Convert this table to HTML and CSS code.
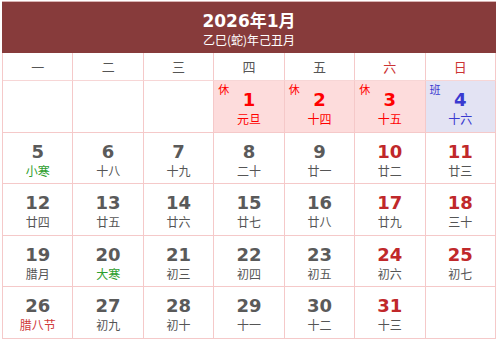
FILE: index.html
```html
<!DOCTYPE html>
<html lang="zh">
<head>
<meta charset="utf-8">
<link rel="stylesheet" href="styles.css">
</head>
<body>
<div class="cal">
  <div class="head">
    <div class="title">2026年1月</div>
    <div class="sub">乙巳(蛇)年己丑月</div>
  </div>
  <div class="grid">
    <div class="wd">一</div><div class="wd">二</div><div class="wd">三</div><div class="wd">四</div><div class="wd">五</div><div class="wd we">六</div><div class="wd we">日</div>

    <div class="c"></div><div class="c"></div><div class="c"></div>
    <div class="c hol"><span class="tag">休</span><b>1</b><i>元旦</i></div>
    <div class="c hol"><span class="tag">休</span><b>2</b><i>十四</i></div>
    <div class="c hol"><span class="tag">休</span><b>3</b><i>十五</i></div>
    <div class="c work"><span class="tag">班</span><b>4</b><i>十六</i></div>

    <div class="c"><b>5</b><i class="term">小寒</i></div>
    <div class="c"><b>6</b><i>十八</i></div>
    <div class="c"><b>7</b><i>十九</i></div>
    <div class="c"><b>8</b><i>二十</i></div>
    <div class="c"><b>9</b><i>廿一</i></div>
    <div class="c we"><b>10</b><i>廿二</i></div>
    <div class="c we"><b>11</b><i>廿三</i></div>

    <div class="c"><b>12</b><i>廿四</i></div>
    <div class="c"><b>13</b><i>廿五</i></div>
    <div class="c"><b>14</b><i>廿六</i></div>
    <div class="c"><b>15</b><i>廿七</i></div>
    <div class="c"><b>16</b><i>廿八</i></div>
    <div class="c we"><b>17</b><i>廿九</i></div>
    <div class="c we"><b>18</b><i>三十</i></div>

    <div class="c"><b>19</b><i>腊月</i></div>
    <div class="c"><b>20</b><i class="term">大寒</i></div>
    <div class="c"><b>21</b><i>初三</i></div>
    <div class="c"><b>22</b><i>初四</i></div>
    <div class="c"><b>23</b><i>初五</i></div>
    <div class="c we"><b>24</b><i>初六</i></div>
    <div class="c we"><b>25</b><i>初七</i></div>

    <div class="c"><b>26</b><i class="fest">腊八节</i></div>
    <div class="c"><b>27</b><i>初九</i></div>
    <div class="c"><b>28</b><i>初十</i></div>
    <div class="c"><b>29</b><i>十一</i></div>
    <div class="c"><b>30</b><i>十二</i></div>
    <div class="c we"><b>31</b><i>十三</i></div>
    <div class="c"></div>
  </div>
</div>
</body>
</html>
```
FILE: styles.css
```css
* { box-sizing: border-box; }
html, body { margin: 0; padding: 0; background: #fff; }
body { font-family: "Noto Sans CJK SC", "DejaVu Sans", sans-serif; }
.cal {
  width: 494px;
  margin: 1px 0 0 2px;
  border-top: 1px solid #d9b3b3;
}
.head {
  background: #873b3b;
  height: 51px;
  color: #fff;
  text-align: center;
  padding-top: 10px;
}
.title {
  font-family: "DejaVu Sans", "Noto Sans CJK SC", sans-serif;
  font-weight: bold;
  font-size: 17px;
  line-height: 18px;
}
.sub {
  font-size: 12px;
  line-height: 14px;
  margin-top: 3px;
}
.grid {
  display: grid;
  grid-template-columns: repeat(7, 1fr);
  grid-template-rows: 28px repeat(5, 51.6px);
  border-left: 1px solid #f5c9c9;
}
.grid > div {
  border-right: 1px solid #f5c9c9;
  border-bottom: 1px solid #f5c9c9;
}
.wd {
  display: flex;
  align-items: center;
  justify-content: center;
  color: #555;
  font-size: 13px;
  border-bottom-color: #f7d6d6 !important;
}
.wd.we { color: #c33; }
.c {
  position: relative;
  display: flex;
  flex-direction: column;
  align-items: center;
  padding-top: 8px;
}
.c b {
  font-family: "DejaVu Sans", sans-serif;
  font-weight: bold;
  font-size: 18px;
  line-height: 21px;
  color: #5a5a5a;
}
.c i {
  font-style: normal;
  font-size: 12px;
  line-height: 16px;
  margin-top: 1px;
  color: #555;
}
.c.we b { color: #c0282a; }
.c i.term { color: #2e9e2e; }
.c i.fest { color: #d03a3a; }
.hol { background: #fddcdc; }
.hol b, .hol i, .hol .tag { color: #f00 !important; }
.work { background: #e3e3f3; }
.work b, .work i, .work .tag { color: #3a3ad0 !important; }
.tag {
  position: absolute;
  left: 4px;
  top: 2px;
  font-size: 11px;
  line-height: 12px;
}
```
